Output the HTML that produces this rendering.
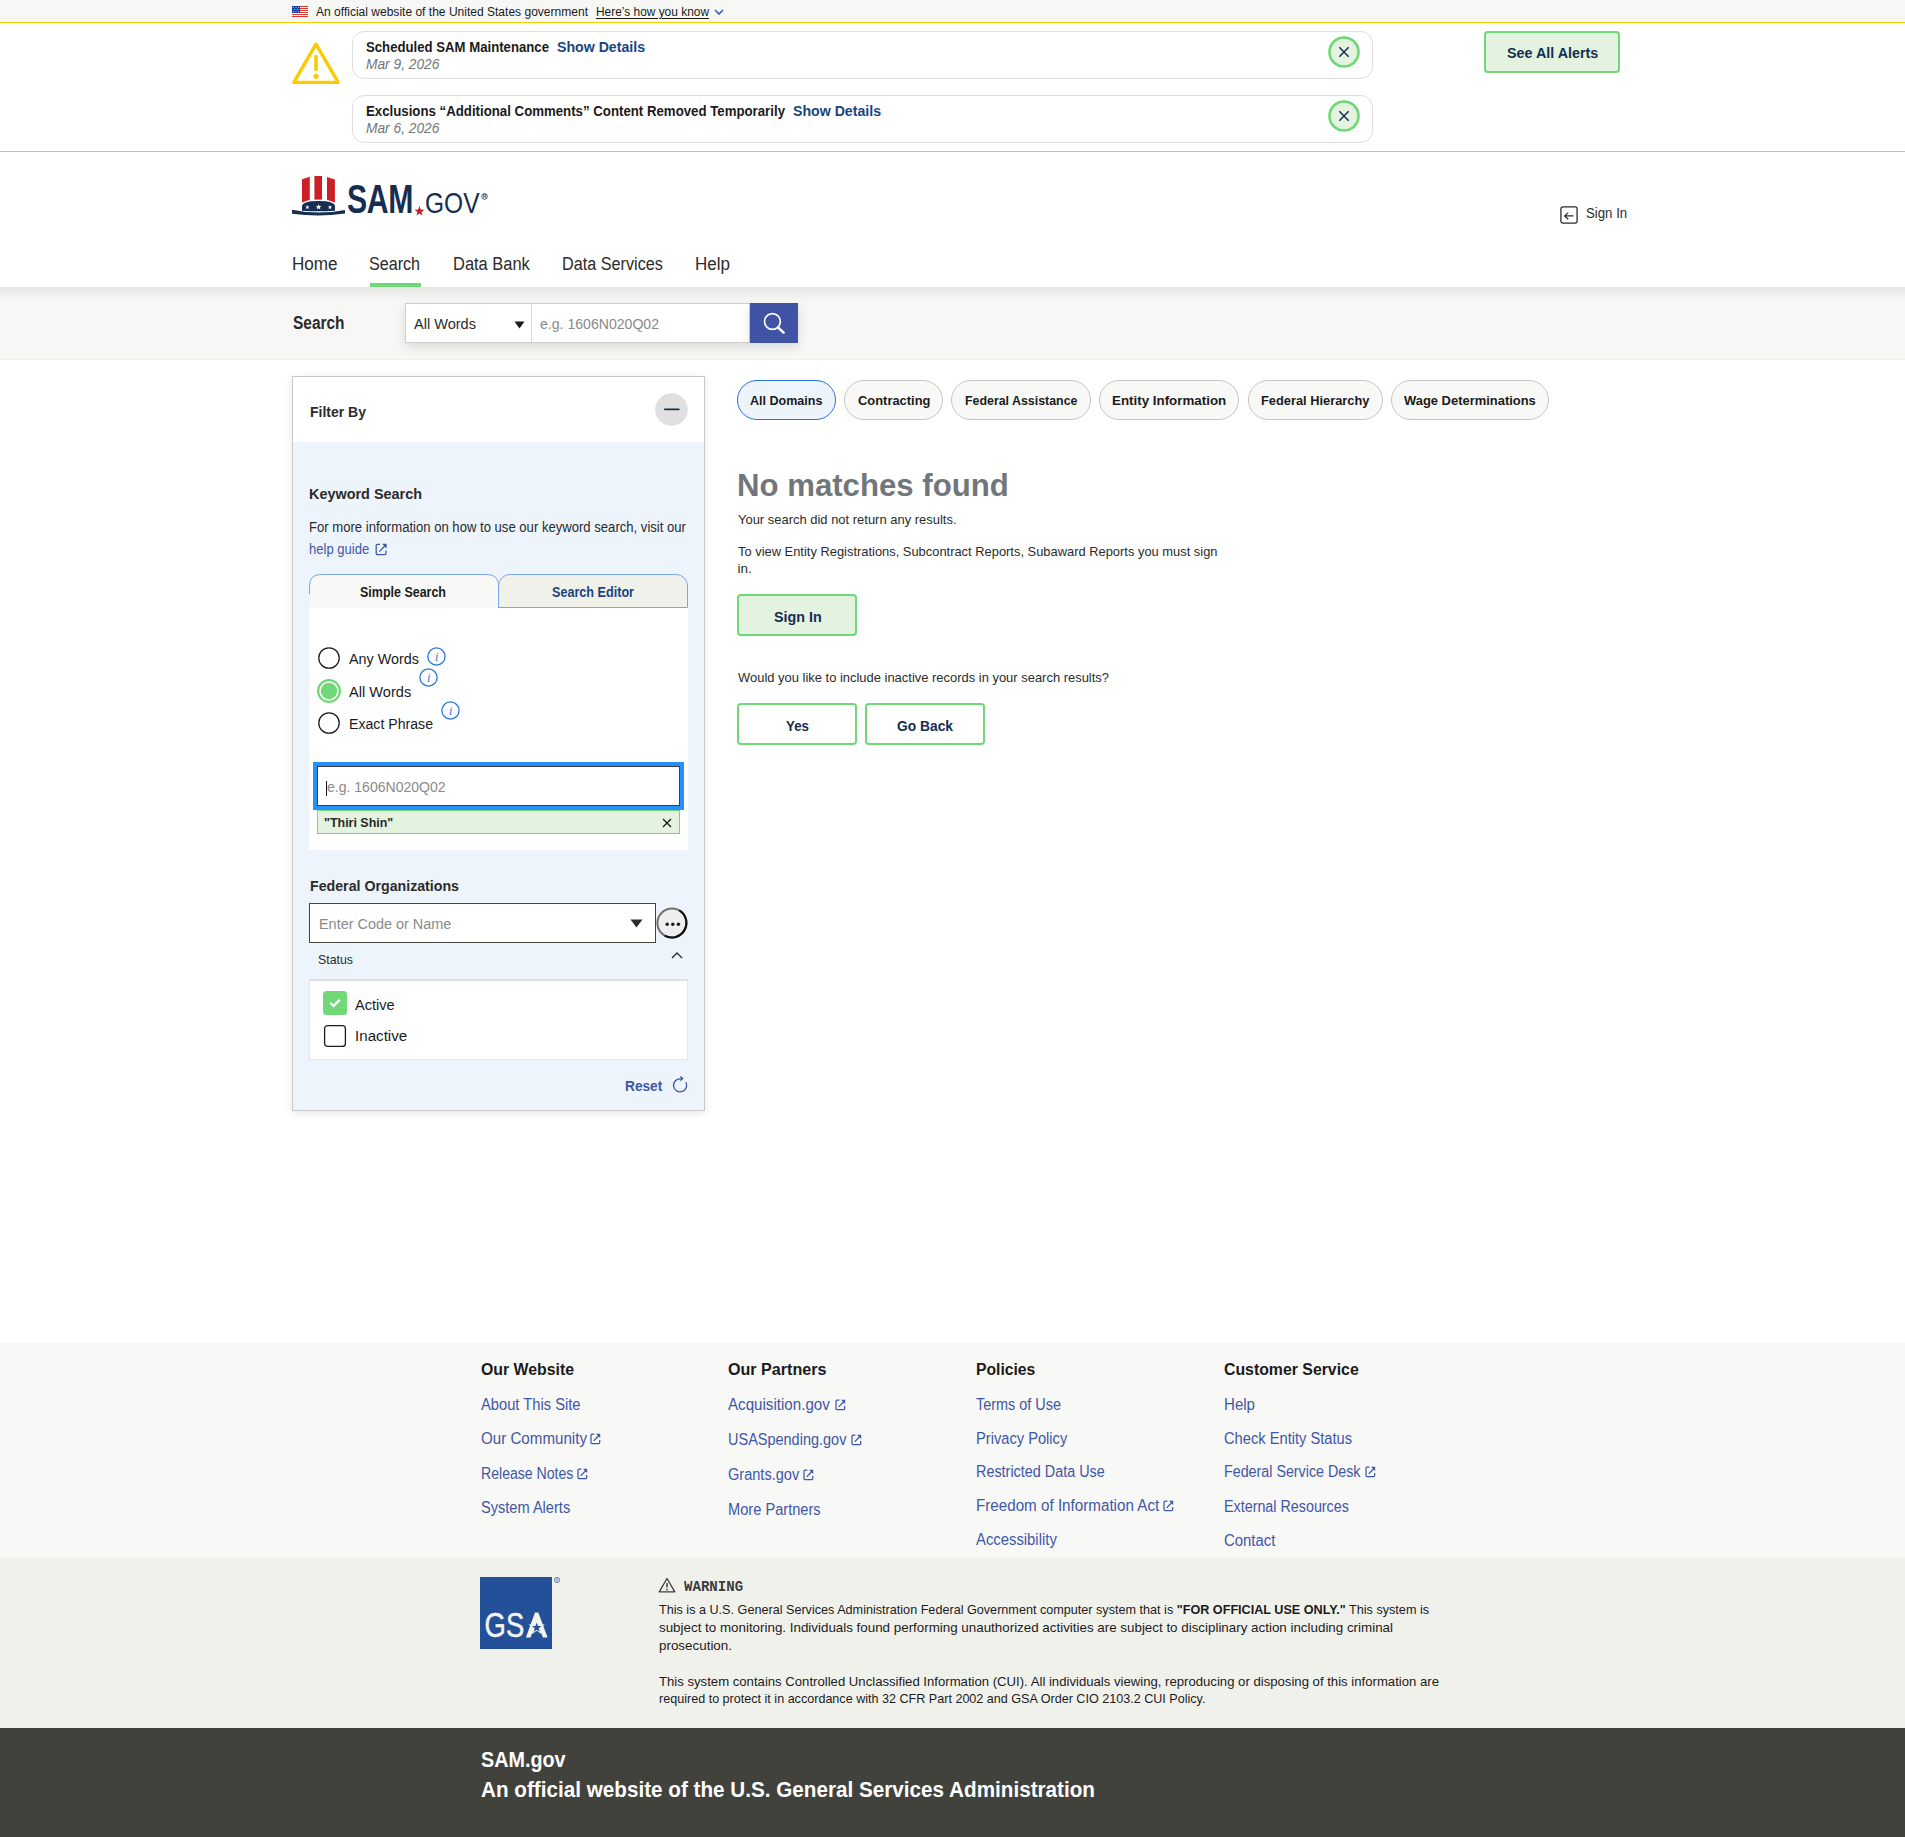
<!DOCTYPE html>
<html><head><meta charset="utf-8"><title>SAM.gov Search</title>
<style>
html,body{margin:0;padding:0;}
body{width:1905px;height:1837px;position:relative;overflow:hidden;background:#fff;font-family:"Liberation Sans",sans-serif;}
.b{position:absolute;display:block;}
.t{position:absolute;white-space:nowrap;line-height:1;transform-origin:0 0;}
</style></head><body>
<div class="b" style="left:0px;top:0px;width:1905px;height:22px;background:#f7f7f5;"></div>
<div class="b" style="left:0px;top:22px;width:1905px;height:1px;background:#facc00;"></div>
<svg class="b" style="left:292px;top:6px;" width="16" height="11" viewBox="0 0 16 11"><rect width="16" height="11" fill="#fff"/><rect y="0" width="16" height="1" fill="#d83933"/><rect y="2" width="16" height="1" fill="#d83933"/><rect y="4" width="16" height="1" fill="#d83933"/><rect y="6" width="16" height="1" fill="#d83933"/><rect y="8" width="16" height="1" fill="#d83933"/><rect y="10" width="16" height="1" fill="#d83933"/><rect y="10" width="16" height="1" fill="#d83933"/><rect width="8" height="7" fill="#1d3f9b"/><circle cx="1.4" cy="1.3" r="0.5" fill="#fff"/><circle cx="4" cy="1.3" r="0.5" fill="#fff"/><circle cx="6.6" cy="1.3" r="0.5" fill="#fff"/><circle cx="2.7" cy="3.3" r="0.5" fill="#fff"/><circle cx="5.3" cy="3.3" r="0.5" fill="#fff"/><circle cx="1.4" cy="5.3" r="0.5" fill="#fff"/><circle cx="4" cy="5.3" r="0.5" fill="#fff"/><circle cx="6.6" cy="5.3" r="0.5" fill="#fff"/></svg>
<svg class="b" style="left:714px;top:9px;" width="10" height="6" viewBox="0 0 10 6"><path d="M1 1 L5 5 L9 1" fill="none" stroke="#3a57c0" stroke-width="1.6"/></svg>
<div class="b" style="left:0px;top:151px;width:1905px;height:1px;background:#facc00;"></div>
<svg class="b" style="left:290px;top:40px;" width="52" height="46" viewBox="0 0 52 46"><path d="M26 4.2 L48.2 42.4 L3.8 42.4 Z" fill="none" stroke="#facc00" stroke-width="3.4" stroke-linejoin="round"/><path d="M26 16.5 L26 29.5" stroke="#facc00" stroke-width="3.6" stroke-linecap="round"/><circle cx="26" cy="36.3" r="2.6" fill="#facc00"/></svg>
<div class="b" style="left:352px;top:31px;width:1021px;height:48px;box-sizing:border-box;border:1px solid #dcdee0;border-radius:12px;background:#fff;"></div>
<svg class="b" style="left:1328px;top:36px;" width="32" height="32" viewBox="0 0 32 32"><circle cx="16" cy="16" r="14.5" fill="#e3f3df" stroke="#70d876" stroke-width="2.6"/><path d="M11.3 11.3 L20.7 20.7 M20.7 11.3 L11.3 20.7" stroke="#162e51" stroke-width="1.5"/></svg>
<div class="b" style="left:352px;top:95px;width:1021px;height:48px;box-sizing:border-box;border:1px solid #dcdee0;border-radius:12px;background:#fff;"></div>
<svg class="b" style="left:1328px;top:100px;" width="32" height="32" viewBox="0 0 32 32"><circle cx="16" cy="16" r="14.5" fill="#e3f3df" stroke="#70d876" stroke-width="2.6"/><path d="M11.3 11.3 L20.7 20.7 M20.7 11.3 L11.3 20.7" stroke="#162e51" stroke-width="1.5"/></svg>
<div class="b" style="left:1484px;top:31px;width:136px;height:42px;box-sizing:border-box;border:2.5px solid #70d876;border-radius:4px;background:#e3f3df;"></div>
<div class="b" style="left:0px;top:152px;width:1905px;height:86px;background:#fff;"></div>
<div class="b" style="left:0px;top:238px;width:1905px;height:1px;background:#f0f0ec;"></div>
<svg class="b" style="left:292px;top:176px;" width="54" height="41" viewBox="0 0 54 41"><path d="M10 3.3 L17.8 0.8 L17.8 23.8 L10 26.5 Z" fill="#cd2026"/><path d="M22.4 0 L30 0 L30 23.6 L22.4 23.6 Z" fill="#cd2026"/><path d="M35 1 L42.9 3.4 L42.9 26.5 L35 23.8 Z" fill="#cd2026"/><path d="M10 34.7 L10 30.5 Q10 25 26.5 25 Q43 25 43 30.5 L43 34.7 Q26.5 36 10 34.7 Z" fill="#162e51"/><polygon points="15.40,28.90 15.97,30.42 17.59,30.49 16.32,31.50 16.75,33.06 15.40,32.17 14.05,33.06 14.48,31.50 13.21,30.49 14.83,30.42" fill="#fff"/><polygon points="26.60,28.10 27.34,30.08 29.45,30.17 27.80,31.49 28.36,33.53 26.60,32.36 24.84,33.53 25.40,31.49 23.75,30.17 25.86,30.08" fill="#fff"/><polygon points="38.00,29.00 38.57,30.52 40.19,30.59 38.92,31.60 39.35,33.16 38.00,32.27 36.65,33.16 37.08,31.60 35.81,30.59 37.43,30.52" fill="#fff"/><path d="M0 33.7 Q26.5 39.4 53 33.9 L53 37.6 Q26.5 41.5 0 37.8 Z" fill="#162e51"/></svg>
<div class="t" id="logoSAM" style="left:346.5px;top:178.80px;font-size:40.4px;font-weight:700;color:#162e51;transform:scaleX(0.7477);letter-spacing:-0.5px;">SAM</div>
<svg class="b" style="left:414px;top:205.5px;" width="11" height="10" viewBox="0 0 11 10"><polygon points="5.50,0.10 6.78,3.53 10.45,3.69 7.58,5.97 8.56,9.51 5.50,7.48 2.44,9.51 3.42,5.97 0.55,3.69 4.22,3.53" fill="#cd2026"/></svg>
<div class="t" id="logoGOV" style="left:425px;top:187.77px;font-size:29.8px;font-weight:400;color:#162e51;transform:scaleX(0.8228);">GOV</div>
<svg class="b" style="left:480.5px;top:192.5px;" width="7" height="7" viewBox="0 0 7 7"><circle cx="3.5" cy="3.5" r="2.8" fill="none" stroke="#162e51" stroke-width="0.8"/><text x="3.5" y="5.2" font-size="4.5" text-anchor="middle" fill="#162e51" font-family="Liberation Sans" font-weight="700">R</text></svg>
<svg class="b" style="left:1559.5px;top:205.5px;" width="18" height="18" viewBox="0 0 18 18"><rect x="0.9" y="0.9" width="16.2" height="16.2" rx="2" fill="none" stroke="#2b2b2b" stroke-width="1.3"/><path d="M13.4 9.9 L4.6 9.9 M8.2 6.6 L4.6 9.9 L8.2 13.2" fill="none" stroke="#2b2b2b" stroke-width="1.2"/></svg>
<div class="b" style="left:0px;top:238px;width:1905px;height:49px;background:#fff;"></div>
<div class="b" style="left:370px;top:283px;width:51px;height:4px;background:#70d876;"></div>
<div class="b" style="left:0px;top:287px;width:1905px;height:72px;background:#f7f7f5;"></div>
<div class="b" style="left:0px;top:287px;width:1905px;height:14px;background:linear-gradient(rgba(0,0,0,0.075),rgba(0,0,0,0));"></div>
<div class="b" style="left:0px;top:359px;width:1905px;height:1px;background:#efefeb;"></div>
<div class="b" style="left:405px;top:303px;width:345px;height:40px;box-sizing:border-box;background:#fff;border:1px solid #cfcfcf;box-shadow:0 4px 10px rgba(0,0,0,0.12);"></div>
<div class="b" style="left:531px;top:304px;width:1px;height:38px;background:#d6d6d6;"></div>
<svg class="b" style="left:513.5px;top:320.5px;" width="11" height="8" viewBox="0 0 11 8"><path d="M0.5 0.5 L10.5 0.5 L5.5 7.5 Z" fill="#1b1b1b"/></svg>
<div class="b" style="left:750px;top:303px;width:48px;height:40px;background:#4053a4;box-shadow:0 4px 10px rgba(0,0,0,0.12);"></div>
<svg class="b" style="left:760px;top:310px;" width="28" height="28" viewBox="0 0 28 28"><circle cx="12.4" cy="11.5" r="7.9" fill="none" stroke="#fff" stroke-width="1.7"/><path d="M18 17.3 L23.6 22.7" stroke="#fff" stroke-width="2.5" stroke-linecap="round"/></svg>
<div class="b" style="left:292px;top:376px;width:413px;height:735px;box-sizing:border-box;border:1px solid #c9c9c9;background:#edf4fb;box-shadow:0 2px 8px rgba(0,0,0,0.10);"></div>
<div class="b" style="left:293px;top:377px;width:411px;height:65px;background:#fff;"></div>
<svg class="b" style="left:655px;top:393px;" width="33" height="33" viewBox="0 0 33 33"><circle cx="16.5" cy="16.5" r="16.3" fill="#e0e0e0"/><path d="M9.8 16.3 L23.8 16.3" stroke="#162e51" stroke-width="1.7" stroke-linecap="round"/></svg>
<svg class="b" style="left:374.5px;top:542.5px;" width="13" height="13" viewBox="0 0 13 13"><path d="M5 1.4 L2.2 1.4 Q1.2 1.4 1.2 2.4 L1.2 10.6 Q1.2 11.6 2.2 11.6 L10 11.6 Q11 11.6 11 10.6 L11 7.6" fill="none" stroke="#3f57a6" stroke-width="1.3"/><path d="M4.3 8.6 L9.8 3" stroke="#3f57a6" stroke-width="1.3"/><path d="M7 0.8 L11.6 0.8 L11.6 5.4 Z" fill="#3f57a6"/></svg>
<svg class="b" style="left:309px;top:574px;" width="190" height="34" viewBox="0 0 190 34"><path d="M0 34 L0 12 Q0 0 12 0 L178 0 Q190 0 190 12 L190 34 Z" fill="#f8f8f6"/><path d="M0.5 20 L0.5 12 Q0.5 0.5 12 0.5 L178 0.5 Q189.5 0.5 189.5 12 L189.5 34" fill="none" stroke="#7aa5ee" stroke-width="1"/></svg>
<div class="b" style="left:498px;top:574px;width:190px;height:34px;box-sizing:border-box;background:#f1f1ec;border:1px solid #7aa5ee;border-radius:12px 12px 0 0;"></div>
<div class="b" style="left:309px;top:608px;width:379px;height:242px;background:#fff;"></div>
<svg class="b" style="left:318px;top:647px;" width="22" height="22" viewBox="0 0 22 22"><circle cx="11" cy="11" r="10.2" fill="#fff" stroke="#1b1b1b" stroke-width="1.25"/></svg>
<svg class="b" style="left:426.5px;top:646.5px;" width="19" height="19" viewBox="0 0 19 19"><circle cx="9.5" cy="9.5" r="8.6" fill="none" stroke="#2672de" stroke-width="1.3"/><text x="9.6" y="14" font-size="12" text-anchor="middle" fill="#2672de" font-family="Liberation Serif" font-style="italic" font-weight="400">i</text></svg>
<svg class="b" style="left:317px;top:679px;" width="24" height="24" viewBox="0 0 24 24"><circle cx="12" cy="12" r="10.9" fill="#fff" stroke="#70d876" stroke-width="2.3"/><circle cx="12" cy="12" r="8.2" fill="#70d876"/></svg>
<svg class="b" style="left:418.7px;top:667.8px;" width="19" height="19" viewBox="0 0 19 19"><circle cx="9.5" cy="9.5" r="8.6" fill="none" stroke="#2672de" stroke-width="1.3"/><text x="9.6" y="14" font-size="12" text-anchor="middle" fill="#2672de" font-family="Liberation Serif" font-style="italic" font-weight="400">i</text></svg>
<svg class="b" style="left:318px;top:712px;" width="22" height="22" viewBox="0 0 22 22"><circle cx="11" cy="11" r="10.2" fill="#fff" stroke="#1b1b1b" stroke-width="1.25"/></svg>
<svg class="b" style="left:440.5px;top:700.5px;" width="19" height="19" viewBox="0 0 19 19"><circle cx="9.5" cy="9.5" r="8.6" fill="none" stroke="#2672de" stroke-width="1.3"/><text x="9.6" y="14" font-size="12" text-anchor="middle" fill="#2672de" font-family="Liberation Serif" font-style="italic" font-weight="400">i</text></svg>
<div class="b" style="left:313px;top:762px;width:371px;height:48px;box-sizing:border-box;border:4px solid #2491ff;background:#fff;"></div>
<div class="b" style="left:317px;top:766px;width:363px;height:40px;box-sizing:border-box;border:1px solid #3d3d3d;background:#fff;"></div>
<div class="b" style="left:326px;top:781px;width:1px;height:15px;background:#1b1b1b;"></div>
<div class="b" style="left:317px;top:810px;width:363px;height:24px;box-sizing:border-box;border:1px solid #70d876;background:#e3f3df;"></div>
<svg class="b" style="left:661px;top:816.5px;" width="12" height="12" viewBox="0 0 12 12"><path d="M2 2 L10 10 M10 2 L2 10" stroke="#1b1b1b" stroke-width="1.3"/></svg>
<div class="b" style="left:309px;top:903px;width:347px;height:40px;box-sizing:border-box;border:1px solid #46463f;background:#fff;"></div>
<svg class="b" style="left:629.5px;top:918.5px;" width="13" height="9" viewBox="0 0 13 9"><path d="M0.5 0.5 L12.5 0.5 L6.5 8.5 Z" fill="#2b2b2b"/></svg>
<svg class="b" style="left:656px;top:907px;" width="32" height="32" viewBox="0 0 32 32"><circle cx="16" cy="16" r="14.6" fill="#eeeeee" stroke="#707070" stroke-width="2"/><path d="M23.3 3.36 A14.6 14.6 0 0 1 8.7 28.64" fill="none" stroke="#111" stroke-width="2.1"/><circle cx="11.2" cy="17.2" r="1.7" fill="#1b1b1b"/><circle cx="16.8" cy="17.2" r="1.7" fill="#1b1b1b"/><circle cx="22.4" cy="17.2" r="1.7" fill="#1b1b1b"/></svg>
<svg class="b" style="left:670.5px;top:950.6px;" width="12" height="8" viewBox="0 0 12 8"><path d="M1 7 L6 2 L11 7" fill="none" stroke="#2b2b2b" stroke-width="1.3"/></svg>
<div class="b" style="left:309px;top:979px;width:379px;height:81px;box-sizing:border-box;border:1px solid #e6e6e6;border-top:2px solid #e0e0e0;background:#fff;"></div>
<svg class="b" style="left:323px;top:991px;" width="24" height="24" viewBox="0 0 24 24"><rect width="24" height="24" rx="3.5" fill="#70d876"/><path d="M7.2 11.8 L10.6 14.9 L16.8 8.8" fill="none" stroke="#fff" stroke-width="2.4"/></svg>
<svg class="b" style="left:323px;top:1024px;" width="24" height="24" viewBox="0 0 24 24"><rect x="1.6" y="1.6" width="20.8" height="20.8" rx="3" fill="#fff" stroke="#1b1b1b" stroke-width="1.3"/></svg>
<svg class="b" style="left:671.5px;top:1075.5px;" width="16" height="17" viewBox="0 0 16 17"><path d="M13.8 6.2 A6.5 6.5 0 1 1 8.2 2.8" fill="none" stroke="#3f57a6" stroke-width="1.3"/><path d="M8.4 -0.4 L11.6 2.6 L8.4 5.4 Z" fill="#3f57a6"/></svg>
<div class="b" style="left:737.2px;top:380px;width:98.6px;height:40px;box-sizing:border-box;border:1.5px solid #2672de;border-radius:20px;background:#edf4fb;"></div>
<div class="b" style="left:844.2px;top:380px;width:98.5px;height:40px;box-sizing:border-box;border:1px solid #c6c6c6;border-radius:20px;background:#f8f8f6;"></div>
<div class="b" style="left:951px;top:380px;width:139.6px;height:40px;box-sizing:border-box;border:1px solid #c6c6c6;border-radius:20px;background:#f8f8f6;"></div>
<div class="b" style="left:1099.2px;top:380px;width:139.6px;height:40px;box-sizing:border-box;border:1px solid #c6c6c6;border-radius:20px;background:#f8f8f6;"></div>
<div class="b" style="left:1247.5px;top:380px;width:135.1px;height:40px;box-sizing:border-box;border:1px solid #c6c6c6;border-radius:20px;background:#f8f8f6;"></div>
<div class="b" style="left:1391.3px;top:380px;width:157.5px;height:40px;box-sizing:border-box;border:1px solid #c6c6c6;border-radius:20px;background:#f8f8f6;"></div>
<div class="b" style="left:737px;top:594px;width:120px;height:42px;box-sizing:border-box;border:2.5px solid #70d876;border-radius:4px;background:#e3f3df;"></div>
<div class="b" style="left:737px;top:703px;width:120px;height:42px;box-sizing:border-box;border:2.5px solid #70d876;border-radius:4px;background:#fff;"></div>
<div class="b" style="left:865px;top:703px;width:120px;height:42px;box-sizing:border-box;border:2.5px solid #70d876;border-radius:4px;background:#fff;"></div>
<div class="b" style="left:0px;top:1343px;width:1905px;height:214px;background:#f8f8f6;"></div>
<div class="b" style="left:0px;top:1557px;width:1905px;height:171px;background:#f1f1ec;"></div>
<div class="b" style="left:0px;top:1728px;width:1905px;height:109px;background:#42423d;"></div>
<svg class="b" style="left:590.4px;top:1432.8999999999999px;" width="12" height="12" viewBox="0 0 12 12"><path d="M4.4 1.2 L2 1.2 Q1 1.2 1 2.2 L1 9.5 Q1 10.5 2 10.5 L8.7 10.5 Q9.7 10.5 9.7 9.5 L9.7 6.9" fill="none" stroke="#3f57a6" stroke-width="1.25"/><path d="M3.7 7.9 L8.6 2.7" stroke="#3f57a6" stroke-width="1.3"/><path d="M6 0.7 L10.2 0.7 L10.2 4.9 Z" fill="#3f57a6"/></svg>
<svg class="b" style="left:576.8px;top:1467.6px;" width="12" height="12" viewBox="0 0 12 12"><path d="M4.4 1.2 L2 1.2 Q1 1.2 1 2.2 L1 9.5 Q1 10.5 2 10.5 L8.7 10.5 Q9.7 10.5 9.7 9.5 L9.7 6.9" fill="none" stroke="#3f57a6" stroke-width="1.25"/><path d="M3.7 7.9 L8.6 2.7" stroke="#3f57a6" stroke-width="1.3"/><path d="M6 0.7 L10.2 0.7 L10.2 4.9 Z" fill="#3f57a6"/></svg>
<svg class="b" style="left:834.5px;top:1398.8px;" width="12" height="12" viewBox="0 0 12 12"><path d="M4.4 1.2 L2 1.2 Q1 1.2 1 2.2 L1 9.5 Q1 10.5 2 10.5 L8.7 10.5 Q9.7 10.5 9.7 9.5 L9.7 6.9" fill="none" stroke="#3f57a6" stroke-width="1.25"/><path d="M3.7 7.9 L8.6 2.7" stroke="#3f57a6" stroke-width="1.3"/><path d="M6 0.7 L10.2 0.7 L10.2 4.9 Z" fill="#3f57a6"/></svg>
<svg class="b" style="left:851px;top:1434.3px;" width="12" height="12" viewBox="0 0 12 12"><path d="M4.4 1.2 L2 1.2 Q1 1.2 1 2.2 L1 9.5 Q1 10.5 2 10.5 L8.7 10.5 Q9.7 10.5 9.7 9.5 L9.7 6.9" fill="none" stroke="#3f57a6" stroke-width="1.25"/><path d="M3.7 7.9 L8.6 2.7" stroke="#3f57a6" stroke-width="1.3"/><path d="M6 0.7 L10.2 0.7 L10.2 4.9 Z" fill="#3f57a6"/></svg>
<svg class="b" style="left:803.3px;top:1468.8px;" width="12" height="12" viewBox="0 0 12 12"><path d="M4.4 1.2 L2 1.2 Q1 1.2 1 2.2 L1 9.5 Q1 10.5 2 10.5 L8.7 10.5 Q9.7 10.5 9.7 9.5 L9.7 6.9" fill="none" stroke="#3f57a6" stroke-width="1.25"/><path d="M3.7 7.9 L8.6 2.7" stroke="#3f57a6" stroke-width="1.3"/><path d="M6 0.7 L10.2 0.7 L10.2 4.9 Z" fill="#3f57a6"/></svg>
<svg class="b" style="left:1162.6px;top:1499.8px;" width="12" height="12" viewBox="0 0 12 12"><path d="M4.4 1.2 L2 1.2 Q1 1.2 1 2.2 L1 9.5 Q1 10.5 2 10.5 L8.7 10.5 Q9.7 10.5 9.7 9.5 L9.7 6.9" fill="none" stroke="#3f57a6" stroke-width="1.25"/><path d="M3.7 7.9 L8.6 2.7" stroke="#3f57a6" stroke-width="1.3"/><path d="M6 0.7 L10.2 0.7 L10.2 4.9 Z" fill="#3f57a6"/></svg>
<svg class="b" style="left:1364.7px;top:1465.8px;" width="12" height="12" viewBox="0 0 12 12"><path d="M4.4 1.2 L2 1.2 Q1 1.2 1 2.2 L1 9.5 Q1 10.5 2 10.5 L8.7 10.5 Q9.7 10.5 9.7 9.5 L9.7 6.9" fill="none" stroke="#3f57a6" stroke-width="1.25"/><path d="M3.7 7.9 L8.6 2.7" stroke="#3f57a6" stroke-width="1.3"/><path d="M6 0.7 L10.2 0.7 L10.2 4.9 Z" fill="#3f57a6"/></svg>
<div class="b" style="left:480px;top:1577px;width:72px;height:72px;background:#235098;"></div>
<svg class="b" style="left:480px;top:1577px;" width="72" height="72" viewBox="0 0 72 72"><text x="4.6" y="60.4" font-size="35.6" fill="#f4f4ef" stroke="#f4f4ef" stroke-width="0.45" font-family="Liberation Sans" textLength="39.6" lengthAdjust="spacingAndGlyphs">GS</text><path d="M45.9 60.4 L55 35.6 L58.3 35.6 L67.6 60.4 L62.9 60.4 L56.6 43 L50.6 60.4 Z" fill="#f4f4ef"/><polygon points="56.70,41.60 58.82,47.29 64.88,47.54 60.12,51.31 61.75,57.16 56.70,53.80 51.65,57.16 53.28,51.31 48.52,47.54 54.58,47.29" fill="#f4f4ef"/><polygon points="56.70,45.60 57.93,48.90 61.46,49.05 58.70,51.25 59.64,54.65 56.70,52.70 53.76,54.65 54.70,51.25 51.94,49.05 55.47,48.90" fill="#235098"/></svg>
<svg class="b" style="left:553px;top:1576px;" width="8" height="8" viewBox="0 0 8 8"><circle cx="4" cy="4" r="2.7" fill="none" stroke="#5a78b0" stroke-width="0.8"/><path d="M3.2 5.8 L3.2 2.4 L4.4 2.4 Q5.2 2.4 5.2 3.2 Q5.2 4 4.4 4 L3.2 4 M4.3 4 L5.2 5.8" fill="none" stroke="#5a78b0" stroke-width="0.6"/></svg>
<svg class="b" style="left:658px;top:1577px;" width="18" height="16" viewBox="0 0 18 16"><path d="M9 1.5 L16.8 14.8 L1.2 14.8 Z" fill="none" stroke="#3d3d3d" stroke-width="1.3" stroke-linejoin="round"/><path d="M9 6 L9 10.5" stroke="#3d3d3d" stroke-width="1.5"/><circle cx="9" cy="12.6" r="0.9" fill="#3d3d3d"/></svg>
<div class="t" id="t1" style="left:316.00px;top:6.02px;font-size:12.50px;color:#1b1b1b;transform:scaleX(0.9626);">An official website of the United States government</div>
<div class="t" id="t2" style="left:596.00px;top:6.02px;font-size:12.50px;color:#1b1b1b;transform:scaleX(0.9528);text-decoration:underline;text-underline-offset:1.5px;">Here’s how you know</div>
<div class="t" id="t3" style="left:365.60px;top:39.75px;font-size:14.00px;color:#1b1b1b;font-weight:700;transform:scaleX(0.9409);">Scheduled SAM Maintenance</div>
<div class="t" id="t4" style="left:557.40px;top:39.75px;font-size:14.00px;color:#1a4480;font-weight:700;transform:scaleX(1.0099);">Show Details</div>
<div class="t" id="t5" style="left:365.60px;top:56.75px;font-size:14.00px;color:#71767a;font-style:italic;transform:scaleX(0.9824);">Mar 9, 2026</div>
<div class="t" id="t6" style="left:365.60px;top:103.95px;font-size:14.00px;color:#1b1b1b;font-weight:700;transform:scaleX(0.9455);">Exclusions “Additional Comments” Content Removed Temporarily</div>
<div class="t" id="t7" style="left:792.50px;top:103.95px;font-size:14.00px;color:#1a4480;font-weight:700;transform:scaleX(1.0099);">Show Details</div>
<div class="t" id="t8" style="left:365.60px;top:120.95px;font-size:14.00px;color:#71767a;font-style:italic;transform:scaleX(0.9824);">Mar 6, 2026</div>
<div class="t" id="t9" style="left:1506.80px;top:46.33px;font-size:14.50px;color:#162e51;font-weight:700;transform:scaleX(0.9868);">See All Alerts</div>
<div class="t" id="t10" style="left:1586.00px;top:205.48px;font-size:15.50px;color:#2b2b2b;transform:scaleX(0.8536);">Sign In</div>
<div class="t" id="t11" style="left:291.50px;top:254.96px;font-size:18.00px;color:#2b2b2b;transform:scaleX(0.9497);">Home</div>
<div class="t" id="t12" style="left:368.90px;top:254.96px;font-size:18.00px;color:#2b2b2b;transform:scaleX(0.8958);">Search</div>
<div class="t" id="t13" style="left:452.70px;top:254.96px;font-size:18.00px;color:#2b2b2b;transform:scaleX(0.9136);">Data Bank</div>
<div class="t" id="t14" style="left:561.50px;top:254.96px;font-size:18.00px;color:#2b2b2b;transform:scaleX(0.9005);">Data Services</div>
<div class="t" id="t15" style="left:694.50px;top:254.96px;font-size:18.00px;color:#2b2b2b;transform:scaleX(0.9451);">Help</div>
<div class="t" id="t16" style="left:292.60px;top:314.16px;font-size:18.00px;color:#2b2b2b;font-weight:700;transform:scaleX(0.8577);">Search</div>
<div class="t" id="t17" style="left:414.00px;top:316.28px;font-size:15.50px;color:#2b2b2b;transform:scaleX(0.9387);">All Words</div>
<div class="t" id="t18" style="left:540.00px;top:316.28px;font-size:15.50px;color:#8a8a8a;transform:scaleX(0.9084);">e.g. 1606N020Q02</div>
<div class="t" id="t19" style="left:309.50px;top:403.70px;font-size:15.00px;color:#2b2b2b;font-weight:700;transform:scaleX(0.9331);">Filter By</div>
<div class="t" id="t20" style="left:309.40px;top:485.80px;font-size:15.00px;color:#2b2b2b;font-weight:700;transform:scaleX(0.9613);">Keyword Search</div>
<div class="t" id="t21" style="left:309.40px;top:520.05px;font-size:14.00px;color:#2b2b2b;transform:scaleX(0.9353);">For more information on how to use our keyword search, visit our</div>
<div class="t" id="t22" style="left:309.40px;top:541.75px;font-size:14.00px;color:#3f57a6;transform:scaleX(0.9331);">help guide</div>
<div class="t" id="t23" style="left:360.30px;top:585.35px;font-size:14.00px;color:#1b1b1b;font-weight:700;transform:scaleX(0.8912);">Simple Search</div>
<div class="t" id="t24" style="left:552.00px;top:584.75px;font-size:14.00px;color:#1a4480;font-weight:700;transform:scaleX(0.9008);">Search Editor</div>
<div class="t" id="t25" style="left:349.20px;top:650.58px;font-size:15.50px;color:#1b1b1b;transform:scaleX(0.9268);">Any Words</div>
<div class="t" id="t26" style="left:349.20px;top:683.58px;font-size:15.50px;color:#1b1b1b;transform:scaleX(0.9418);">All Words</div>
<div class="t" id="t27" style="left:349.20px;top:715.58px;font-size:15.50px;color:#1b1b1b;transform:scaleX(0.9112);">Exact Phrase</div>
<div class="t" id="t28" style="left:326.80px;top:778.98px;font-size:15.50px;color:#8a8a8a;transform:scaleX(0.9053);">e.g. 1606N020Q02</div>
<div class="t" id="t29" style="left:323.70px;top:815.87px;font-size:13.50px;color:#2b2b2b;font-weight:700;transform:scaleX(0.9232);">"Thiri Shin"</div>
<div class="t" id="t30" style="left:309.50px;top:878.10px;font-size:15.00px;color:#2b2b2b;font-weight:700;transform:scaleX(0.9458);">Federal Organizations</div>
<div class="t" id="t31" style="left:318.90px;top:915.88px;font-size:15.50px;color:#8a8a8a;transform:scaleX(0.9307);">Enter Code or Name</div>
<div class="t" id="t32" style="left:317.80px;top:953.30px;font-size:13.00px;color:#2b2b2b;transform:scaleX(0.9496);">Status</div>
<div class="t" id="t33" style="left:355.30px;top:996.68px;font-size:15.50px;color:#1b1b1b;transform:scaleX(0.9403);">Active</div>
<div class="t" id="t34" style="left:355.30px;top:1028.48px;font-size:15.50px;color:#1b1b1b;transform:scaleX(0.9771);">Inactive</div>
<div class="t" id="t35" style="left:625.40px;top:1079.33px;font-size:14.50px;color:#3f57a6;font-weight:700;transform:scaleX(0.9443);">Reset</div>
<div class="t" id="t36" style="left:750.40px;top:394.07px;font-size:13.50px;color:#1b1b1b;font-weight:700;transform:scaleX(0.9280);">All Domains</div>
<div class="t" id="t37" style="left:857.60px;top:394.07px;font-size:13.50px;color:#1b1b1b;font-weight:700;transform:scaleX(0.9558);">Contracting</div>
<div class="t" id="t38" style="left:964.60px;top:394.07px;font-size:13.50px;color:#1b1b1b;font-weight:700;transform:scaleX(0.9171);">Federal Assistance</div>
<div class="t" id="t39" style="left:1111.80px;top:394.07px;font-size:13.50px;color:#1b1b1b;font-weight:700;transform:scaleX(0.9887);">Entity Information</div>
<div class="t" id="t40" style="left:1260.60px;top:394.07px;font-size:13.50px;color:#1b1b1b;font-weight:700;transform:scaleX(0.9504);">Federal Hierarchy</div>
<div class="t" id="t41" style="left:1403.60px;top:394.07px;font-size:13.50px;color:#1b1b1b;font-weight:700;transform:scaleX(0.9583);">Wage Determinations</div>
<div class="t" id="t42" style="left:737.20px;top:468.71px;font-size:32.00px;color:#71767a;font-weight:700;transform:scaleX(0.9738);">No matches found</div>
<div class="t" id="t43" style="left:737.50px;top:512.97px;font-size:13.50px;color:#2b2b2b;transform:scaleX(0.9598);">Your search did not return any results.</div>
<div class="t" id="t44" style="left:737.50px;top:544.97px;font-size:13.50px;color:#2b2b2b;transform:scaleX(0.9552);">To view Entity Registrations, Subcontract Reports, Subaward Reports you must sign</div>
<div class="t" id="t45" style="left:737.50px;top:562.27px;font-size:13.50px;color:#2b2b2b;">in.</div>
<div class="t" id="t46" style="left:773.60px;top:609.10px;font-size:15.00px;color:#162e51;font-weight:700;transform:scaleX(0.9540);">Sign In</div>
<div class="t" id="t47" style="left:737.50px;top:670.97px;font-size:13.50px;color:#2b2b2b;transform:scaleX(0.9588);">Would you like to include inactive records in your search results?</div>
<div class="t" id="t48" style="left:785.90px;top:718.00px;font-size:15.00px;color:#162e51;font-weight:700;transform:scaleX(0.8889);">Yes</div>
<div class="t" id="t49" style="left:897.40px;top:718.00px;font-size:15.00px;color:#162e51;font-weight:700;transform:scaleX(0.9202);">Go Back</div>
<div class="t" id="t50" style="left:480.50px;top:1361.98px;font-size:16.80px;color:#1b1b1b;font-weight:700;transform:scaleX(0.9447);">Our Website</div>
<div class="t" id="t51" style="left:480.50px;top:1396.73px;font-size:15.80px;color:#3f57a6;transform:scaleX(0.9313);">About This Site</div>
<div class="t" id="t52" style="left:480.50px;top:1430.83px;font-size:15.80px;color:#3f57a6;transform:scaleX(0.9583);">Our Community</div>
<div class="t" id="t53" style="left:480.50px;top:1465.53px;font-size:15.80px;color:#3f57a6;transform:scaleX(0.8917);">Release Notes</div>
<div class="t" id="t54" style="left:480.50px;top:1500.43px;font-size:15.80px;color:#3f57a6;transform:scaleX(0.9236);">System Alerts</div>
<div class="t" id="t55" style="left:728.20px;top:1361.98px;font-size:16.80px;color:#1b1b1b;font-weight:700;transform:scaleX(0.9601);">Our Partners</div>
<div class="t" id="t56" style="left:728.20px;top:1396.73px;font-size:15.80px;color:#3f57a6;transform:scaleX(0.9580);">Acquisition.gov</div>
<div class="t" id="t57" style="left:728.20px;top:1432.23px;font-size:15.80px;color:#3f57a6;transform:scaleX(0.9171);">USASpending.gov</div>
<div class="t" id="t58" style="left:728.20px;top:1466.73px;font-size:15.80px;color:#3f57a6;transform:scaleX(0.9215);">Grants.gov</div>
<div class="t" id="t59" style="left:728.20px;top:1501.53px;font-size:15.80px;color:#3f57a6;transform:scaleX(0.9261);">More Partners</div>
<div class="t" id="t60" style="left:976.30px;top:1361.98px;font-size:16.80px;color:#1b1b1b;font-weight:700;transform:scaleX(0.9348);">Policies</div>
<div class="t" id="t61" style="left:976.30px;top:1396.73px;font-size:15.80px;color:#3f57a6;transform:scaleX(0.9135);">Terms of Use</div>
<div class="t" id="t62" style="left:976.30px;top:1430.73px;font-size:15.80px;color:#3f57a6;transform:scaleX(0.9285);">Privacy Policy</div>
<div class="t" id="t63" style="left:976.30px;top:1463.73px;font-size:15.80px;color:#3f57a6;transform:scaleX(0.9112);">Restricted Data Use</div>
<div class="t" id="t64" style="left:976.30px;top:1497.73px;font-size:15.80px;color:#3f57a6;transform:scaleX(0.9615);">Freedom of Information Act</div>
<div class="t" id="t65" style="left:976.30px;top:1532.43px;font-size:15.80px;color:#3f57a6;transform:scaleX(0.9392);">Accessibility</div>
<div class="t" id="t66" style="left:1224.30px;top:1361.98px;font-size:16.80px;color:#1b1b1b;font-weight:700;transform:scaleX(0.9438);">Customer Service</div>
<div class="t" id="t67" style="left:1224.30px;top:1396.73px;font-size:15.80px;color:#3f57a6;transform:scaleX(0.9538);">Help</div>
<div class="t" id="t68" style="left:1224.30px;top:1430.73px;font-size:15.80px;color:#3f57a6;transform:scaleX(0.9292);">Check Entity Status</div>
<div class="t" id="t69" style="left:1224.30px;top:1463.73px;font-size:15.80px;color:#3f57a6;transform:scaleX(0.9039);">Federal Service Desk</div>
<div class="t" id="t70" style="left:1224.30px;top:1498.73px;font-size:15.80px;color:#3f57a6;transform:scaleX(0.9060);">External Resources</div>
<div class="t" id="t71" style="left:1224.30px;top:1532.73px;font-size:15.80px;color:#3f57a6;transform:scaleX(0.9439);">Contact</div>
<div class="t" id="t72" style="left:683.60px;top:1579.89px;font-size:14.50px;color:#3d3d3d;font-weight:700;font-family:'Liberation Mono', monospace;transform:scaleX(0.9717);">WARNING</div>
<div class="t" id="t73" style="left:659.00px;top:1603.17px;font-size:13.50px;color:#1b1b1b;transform:scaleX(0.9350);">This is a U.S. General Services Administration Federal Government computer system that is <b>"FOR OFFICIAL USE ONLY."</b> This system is</div>
<div class="t" id="t74" style="left:659.00px;top:1621.17px;font-size:13.50px;color:#1b1b1b;transform:scaleX(0.9900);">subject to monitoring. Individuals found performing unauthorized activities are subject to disciplinary action including criminal</div>
<div class="t" id="t75" style="left:659.00px;top:1639.17px;font-size:13.50px;color:#1b1b1b;transform:scaleX(0.9926);">prosecution.</div>
<div class="t" id="t76" style="left:659.00px;top:1674.67px;font-size:13.50px;color:#1b1b1b;transform:scaleX(0.9733);">This system contains Controlled Unclassified Information (CUI). All individuals viewing, reproducing or disposing of this information are</div>
<div class="t" id="t77" style="left:659.00px;top:1692.47px;font-size:13.50px;color:#1b1b1b;transform:scaleX(0.9316);">required to protect it in accordance with 32 CFR Part 2002 and GSA Order CIO 2103.2 CUI Policy.</div>
<div class="t" id="t78" style="left:480.70px;top:1748.88px;font-size:22.00px;color:#fff;font-weight:700;transform:scaleX(0.8988);">SAM.gov</div>
<div class="t" id="t79" style="left:480.50px;top:1779.48px;font-size:22.00px;color:#fff;font-weight:700;transform:scaleX(0.9399);">An official website of the U.S. General Services Administration</div>
</body></html>
